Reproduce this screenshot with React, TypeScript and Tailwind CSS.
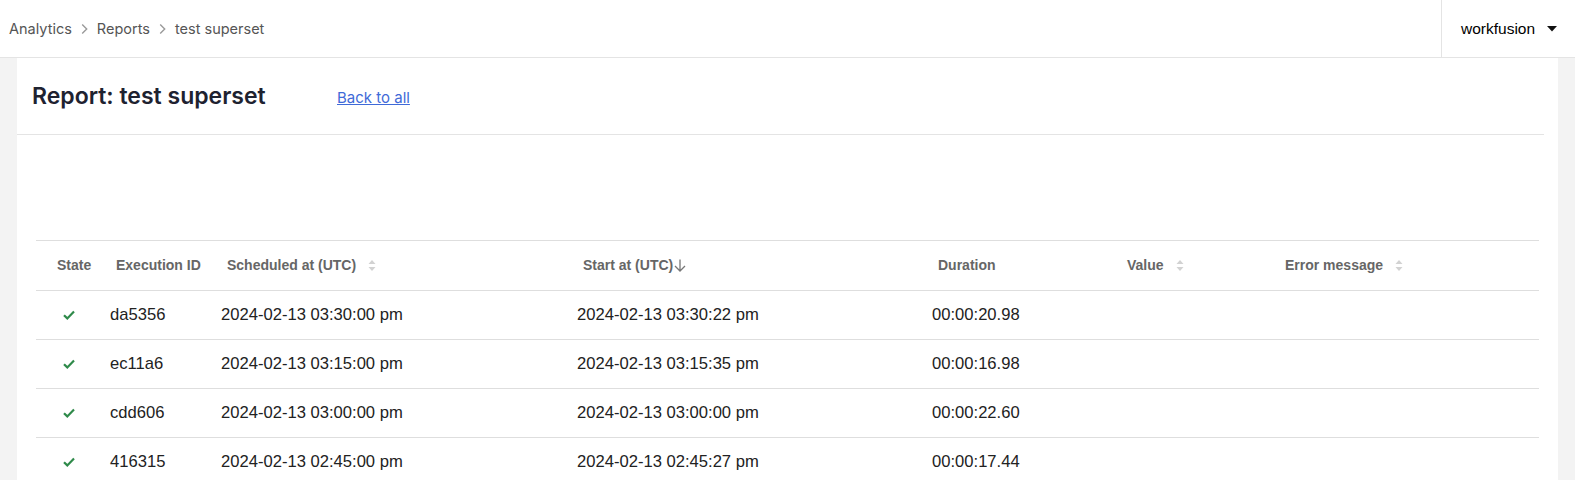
import React from 'react';

type Execution = {
  id: string;
  scheduled: string;
  started: string;
  duration: string;
};

const executions: Execution[] = [
  { id: 'da5356', scheduled: '2024-02-13 03:30:00 pm', started: '2024-02-13 03:30:22 pm', duration: '00:00:20.98' },
  { id: 'ec11a6', scheduled: '2024-02-13 03:15:00 pm', started: '2024-02-13 03:15:35 pm', duration: '00:00:16.98' },
  { id: 'cdd606', scheduled: '2024-02-13 03:00:00 pm', started: '2024-02-13 03:00:00 pm', duration: '00:00:22.60' },
  { id: '416315', scheduled: '2024-02-13 02:45:00 pm', started: '2024-02-13 02:45:27 pm', duration: '00:00:17.44' },
];

const Chevron = () => (
  <svg width="7" height="12" viewBox="0 0 7 12" className="mx-[9px] shrink-0">
    <path d="M1.2 1.5 L5.7 6 L1.2 10.5" fill="none" stroke="#9a9a9a" strokeWidth="1.4" />
  </svg>
);

const SortIcon = () => (
  <svg width="8" height="13" viewBox="0 0 8 13" className="ml-3 shrink-0">
    <path d="M4 1 L7.5 5 H0.5 Z" fill="#d2d2d2" />
    <path d="M4 12 L7.5 8 H0.5 Z" fill="#d2d2d2" />
  </svg>
);

const SortDown = () => (
  <svg width="12" height="13" viewBox="0 0 12 13" className="ml-[1px] shrink-0">
    <path d="M6 0.5 V12 M1 7 L6 12 L11 7" fill="none" stroke="#777" strokeWidth="1.3" />
  </svg>
);

const Check = () => (
  <svg width="12" height="10" viewBox="0 0 12 10">
    <path d="M1 5.2 L4.3 8.4 L11 1.6" fill="none" stroke="#2f8a4a" strokeWidth="2.2" />
  </svg>
);

export default function App() {
  return (
    <div className="min-h-screen bg-[#f3f3f3]">
      {/* Top bar */}
      <header className="h-[58px] bg-white border-b border-[#e4e4e4] flex items-stretch">
        <nav className="flex-1 flex items-center pl-[9px] text-[14.5px] text-[#555] font-['Inter',sans-serif]">
          <span>Analytics</span>
          <Chevron />
          <span>Reports</span>
          <Chevron />
          <span>test superset</span>
        </nav>
        <div className="w-[134px] border-l border-[#e4e4e4] flex items-center pl-[19px] font-['Liberation_Sans',Arial,sans-serif] text-[15.5px] text-black">
          <span>workfusion</span>
          <svg width="10" height="6" viewBox="0 0 10 6" className="ml-[12px]">
            <path d="M0 0 H10 L5 5.5 Z" fill="#111" />
          </svg>
        </div>
      </header>

      <main className="px-[17px]">
        <div className="bg-white min-h-[422px]">
          <div className="h-[77px] mr-[14px] border-b border-[#e4e4e4] flex items-center pl-[15px] font-['Inter',sans-serif]">
            <h1 className="text-[23px] font-semibold text-[#1e2230] w-[305px]">Report: test superset</h1>
            <a href="#" className="text-[15px] text-[#3f6ad8] underline mt-[5px]">Back to all</a>
          </div>

          <div className="pt-[105px] px-[19px]">
            <table className="w-full table-fixed border-collapse font-['Liberation_Sans',Arial,sans-serif]">
              <colgroup>
                <col className="w-[64px]" />
                <col className="w-[111px]" />
                <col className="w-[356px]" />
                <col className="w-[355px]" />
                <col className="w-[189px]" />
                <col className="w-[158px]" />
                <col />
              </colgroup>
              <thead>
                <tr className="h-[50px] border-y border-[#dedede] text-[14px] font-bold text-[#666] text-left">
                  <th className="pl-[21px] font-bold">State</th>
                  <th className="pl-[16px] font-bold">Execution ID</th>
                  <th className="pl-[16px] font-bold">
                    <span className="flex items-center">Scheduled at (UTC)<SortIcon /></span>
                  </th>
                  <th className="pl-[16px] font-bold">
                    <span className="flex items-center">Start at (UTC)<SortDown /></span>
                  </th>
                  <th className="pl-[16px] font-bold">Duration</th>
                  <th className="pl-[16px] font-bold">
                    <span className="flex items-center">Value<SortIcon /></span>
                  </th>
                  <th className="pl-[16px] font-bold">
                    <span className="flex items-center">Error message<SortIcon /></span>
                  </th>
                </tr>
              </thead>
              <tbody className="text-[16.6px] text-[#222]">
                {executions.map((row) => (
                  <tr key={row.id} className="h-[49px] border-b border-[#dedede]">
                    <td className="pl-[27px]">
                      <span className="flex items-center"><Check /></span>
                    </td>
                    <td className="pl-[10px]">{row.id}</td>
                    <td className="pl-[10px]">{row.scheduled}</td>
                    <td className="pl-[10px]">{row.started}</td>
                    <td className="pl-[10px]">{row.duration}</td>
                    <td className="pl-[10px]"></td>
                    <td className="pl-[10px]"></td>
                  </tr>
                ))}
              </tbody>
            </table>
          </div>
        </div>
      </main>
    </div>
  );
}
